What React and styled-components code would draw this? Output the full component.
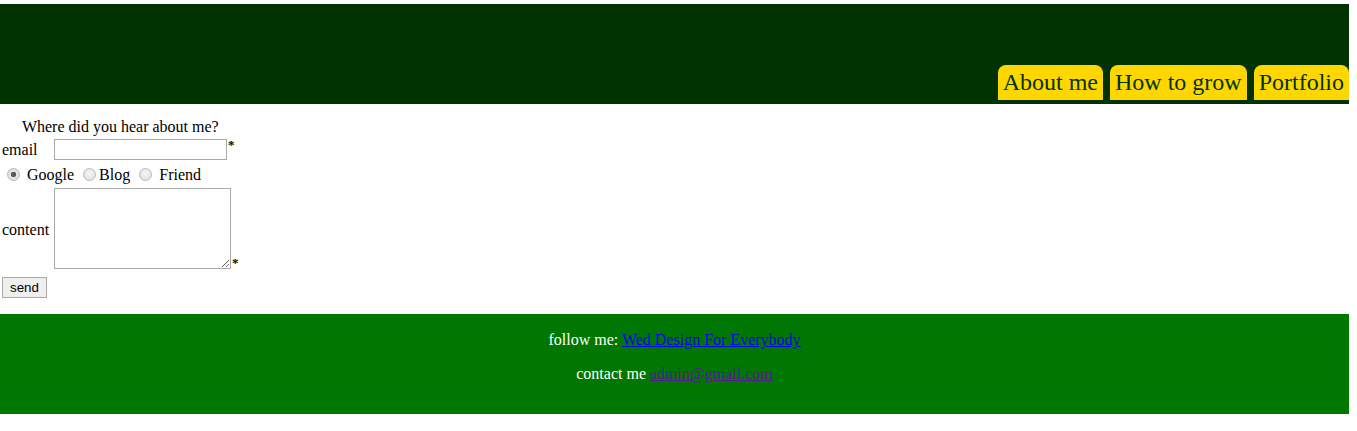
import React from 'react'
import styled, { createGlobalStyle } from 'styled-components'

const GlobalStyle = createGlobalStyle`
  body {
    margin: 0;
    font-family: "Liberation Serif", "Times New Roman", serif;
    font-size: 16px;
    color: #000;
    background: #fff;
  }
`

const Page = styled.div`
  width: 1349px;
  padding-top: 4px;
`

const Header = styled.header`
  height: 100px;
  background: #003300;
  display: flex;
  justify-content: flex-end;
  align-items: flex-end;
  box-sizing: border-box;
  padding-bottom: 4px;
`

const Nav = styled.nav`
  display: flex;
  gap: 7px;
`

const Tab = styled.a`
  display: block;
  background: #ffd700;
  color: #003300;
  font-size: 24px;
  line-height: 35px;
  height: 35px;
  padding: 0 5px 0 5px;
  border-radius: 8px 8px 0 0;
  text-decoration: none;
`

const Main = styled.main`
  padding: 14px 0 16px 2px;
`

const FormTable = styled.table`
  border-collapse: collapse;
  border-spacing: 0;
`

const Caption = styled.caption`
  line-height: 18px;
  padding-bottom: 1px;
`

const Label = styled.td`
  padding: ${p => p.$pad || '0'} 5px 0 0;
  vertical-align: middle;
`

const Field = styled.td`
  padding: ${p => p.$pad || '2px 0'};
  vertical-align: middle;
`

const TextBox = styled.input`
  width: 173px;
  height: 21px;
  box-sizing: border-box;
  border: 1px solid #a9a9a9;
  margin: 0;
  padding: 1px 2px;
`

const Area = styled.textarea`
  width: 177px;
  height: 81px;
  box-sizing: border-box;
  border: 1px solid #a9a9a9;
  margin: 0;
  vertical-align: bottom;
`

const Star = styled.span`
  font-size: 13px;
  font-weight: bold;
  vertical-align: ${p => (p.$low ? 'bottom' : 'top')};
  line-height: 12px;
  margin-left: 1px;
`

const Radio = styled.input`
  appearance: none;
  -webkit-appearance: none;
  box-sizing: border-box;
  margin: 3px 3px 0 5px;
  width: 13px;
  height: 13px;
  border-radius: 50%;
  border: 1px solid #b8b8b8;
  background: radial-gradient(circle at 50% 40%, #f4f4f4 0%, #dedede 100%);
  vertical-align: -1px;

  &:checked {
    background: radial-gradient(circle, #5a5a5a 0 2.5px, #e4e4e4 3px, #dcdcdc 100%);
  }
`

const Send = styled.button`
  font-family: "Liberation Sans", Arial, sans-serif;
  font-size: 13.33px;
  padding: 1px 7px;
  height: 21px;
  margin-top: 8px;
  border: 1px solid #a9a9a9;
  background: #efefef;
  border-radius: 0;
`

const Footer = styled.footer`
  height: 100px;
  background: #007700;
  color: #fff;
  text-align: center;
  box-sizing: border-box;
  padding-top: 17px;
`

const Line = styled.p`
  margin: 0 0 16px;
  line-height: 18px;
`

const Link = styled.a`
  color: ${p => (p.$visited ? '#551a8b' : '#0000ee')};
  text-decoration: underline;
`

export default function App() {
  return (
    <Page>
      <GlobalStyle />
      <Header>
        <Nav>
          <Tab href="#">About me</Tab>
          <Tab href="#">How to grow</Tab>
          <Tab href="#">Portfolio</Tab>
        </Nav>
      </Header>
      <Main>
        <form>
          <FormTable>
            <Caption>Where did you hear about me?</Caption>
            <tbody>
              <tr>
                <Label>email</Label>
                <Field>
                  <TextBox type="text" />
                  <Star>*</Star>
                </Field>
              </tr>
              <tr>
                <Field colSpan={2} $pad="3px 0 4px">
                  <Radio type="radio" name="src" defaultChecked /> Google{' '}
                  <Radio type="radio" name="src" />Blog{' '}
                  <Radio type="radio" name="src" /> Friend
                </Field>
              </tr>
              <tr>
                <Label $pad="3px">content</Label>
                <Field $pad="0">
                  <Area />
                  <Star $low>*</Star>
                </Field>
              </tr>
              <tr>
                <Field colSpan={2} $pad="0">
                  <Send type="button">send</Send>
                </Field>
              </tr>
            </tbody>
          </FormTable>
        </form>
      </Main>
      <Footer>
        <Line>
          follow me: <Link href="#">Wed Design For Everybody</Link>
        </Line>
        <Line>
          contact me <Link href="#" $visited>admin@gmail.com</Link>
        </Line>
      </Footer>
    </Page>
  )
}
